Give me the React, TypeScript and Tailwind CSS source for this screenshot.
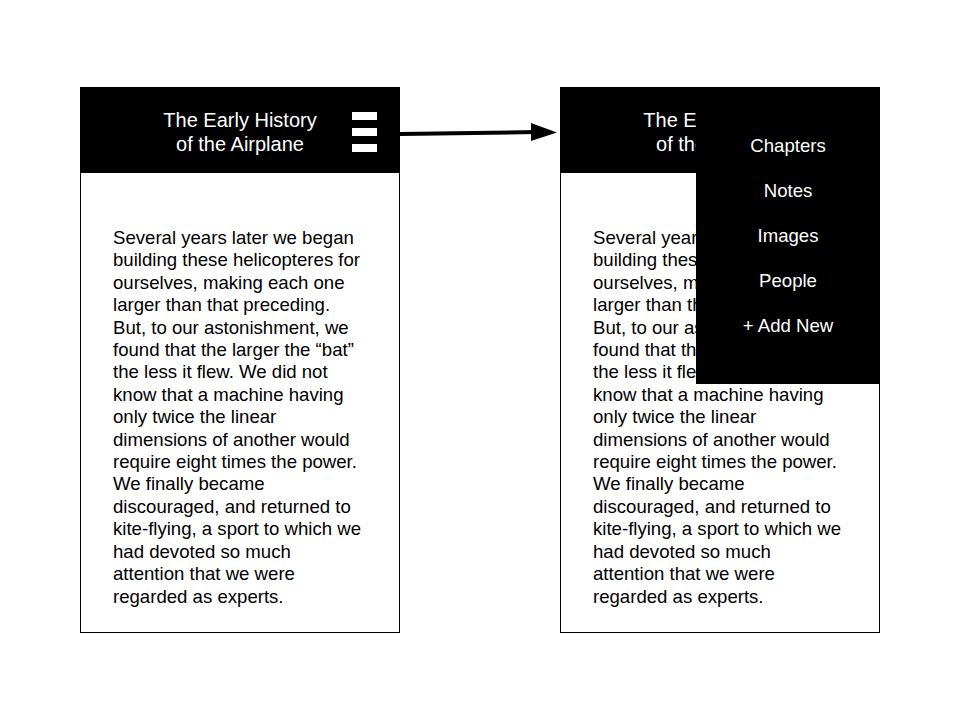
const bodyLines = [
  'Several years later we began',
  'building these helicopteres for',
  'ourselves, making each one',
  'larger than that preceding.',
  'But, to our astonishment, we',
  'found that the larger the \u201cbat\u201d',
  'the less it flew. We did not',
  'know that a machine having',
  'only twice the linear',
  'dimensions of another would',
  'require eight times the power.',
  'We finally became',
  'discouraged, and returned to',
  'kite-flying, a sport to which we',
  'had devoted so much',
  'attention that we were',
  'regarded as experts.',
];

const menuItems = ['Chapters', 'Notes', 'Images', 'People', '+ Add New'];

function Screen({ menuOpen }: { menuOpen: boolean }) {
  return (
    <div className="relative w-[320px] h-[546px] border border-black bg-white shrink-0">
      {/* Header */}
      <div className="relative h-[85px] bg-black flex items-center justify-center pt-[2px]">
        <div className="text-white text-[20px] leading-[24px] text-center">
          <div>The Early History</div>
          <div>of the Airplane</div>
        </div>
        {!menuOpen && (
          <div className="absolute left-[271px] top-[24px] w-[25px] flex flex-col gap-[8px]">
            <div className="h-[8px] bg-white" />
            <div className="h-[8px] bg-white" />
            <div className="h-[8px] bg-white" />
          </div>
        )}
      </div>

      {/* Body */}
      <div className="pt-[54px] pl-[32px] text-[18.6px] leading-[22.4px] text-black">
        {bodyLines.map((line) => (
          <div key={line} className="whitespace-nowrap">{line}</div>
        ))}
      </div>

      {/* Dropdown menu, covers part of the header and body */}
      {menuOpen && (
        <div className="absolute left-[135px] right-[-1px] top-[-1px] h-[297px] pt-[36px] bg-black">
          {menuItems.map((item) => (
            <div key={item} className="h-[45px] flex items-center justify-center text-white text-[18.6px]">
              {item}
            </div>
          ))}
        </div>
      )}
    </div>
  );
}

export default function App() {
  return (
    <div
      className="w-[960px] h-[720px] bg-white flex items-start pt-[87px] pl-[80px]"
      style={{ fontFamily: '"Liberation Sans", Arial, sans-serif' }}
    >
      <Screen menuOpen={false} />
      <div className="w-[160px] shrink-0 pt-[33px]">
        <svg width="160" height="24" viewBox="0 0 160 24">
          <line x1="-1" y1="14" x2="136" y2="12" stroke="black" strokeWidth="4" />
          <polygon points="131,3 157,12.5 131,21" fill="black" />
        </svg>
      </div>
      <Screen menuOpen={true} />
    </div>
  );
}
